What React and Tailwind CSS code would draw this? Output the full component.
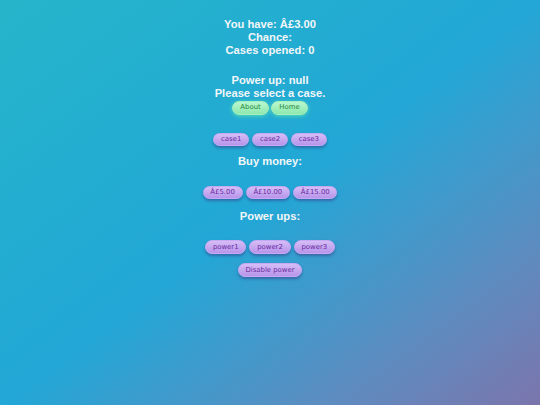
import React, { useState } from "react";

const cases = ["case1", "case2", "case3"];
const amounts = [5, 10, 15];
const powers = ["power1", "power2", "power3"];

// purple pill button
function Pill({ children, onClick }) {
  return (
    <button
      onClick={onClick}
      className="h-[13.5px] px-[6.8px] rounded-full bg-gradient-to-b from-[#d6bdf6] to-[#b895ea] text-[#6a2a9e] text-[6.9px] leading-none font-normal font-['DejaVu_Sans',sans-serif] shadow-[0_2px_3px_rgba(60,40,120,0.45)] border border-[#c7a8f2]"
    >
      {children}
    </button>
  );
}

function GreenPill({ children }) {
  return (
    <button className="h-[13.5px] px-[7.3px] rounded-full bg-gradient-to-b from-[#b8f7cf] to-[#8ee8ad] text-[#2a8a3a] text-[6.9px] leading-none font-normal font-['DejaVu_Sans',sans-serif] shadow-[0_1px_4px_rgba(120,255,160,0.6)] border border-[#a6f0c0]">
      {children}
    </button>
  );
}

export default function App() {
  const [money, setMoney] = useState(3);
  const [opened, setOpened] = useState(0);
  const [power, setPower] = useState(null);

  return (
    <div className="w-[540px] h-[405px] bg-[linear-gradient(to_bottom_right,#25b5ca_0%,#22a7d6_50%,#5d8cc0_80%,#7b75ac_100%)] font-['Liberation_Sans',Arial,sans-serif] text-[#f2f6f8] font-bold text-[11.2px] leading-[12.9px] text-center overflow-hidden">
      <div className="pt-[18px]">
        <div>You have: Â£{money.toFixed(2)}</div>
        <div>Chance: </div>
        <div>Cases opened: {opened}</div>
      </div>
      <div className="mt-[17.5px]">
        <div>Power up: {String(power)}</div>
        <div>Please select a case.</div>
      </div>
      <div className="flex justify-center gap-[2px] mt-[1px]">
        <GreenPill>About</GreenPill>
        <GreenPill>Home</GreenPill>
      </div>

      <div className="flex justify-center gap-[3px] mt-[18px]">
        {cases.map(c => (
          <Pill key={c} onClick={() => setOpened(o => o + 1)}>{c}</Pill>
        ))}
      </div>
      <div className="mt-[9px]">Buy money:</div>
      <div className="flex justify-center gap-[3px] mt-[18px]">
        {amounts.map(a => (
          <Pill key={a} onClick={() => setMoney(m => m + a)}>Â£{a.toFixed(2)}</Pill>
        ))}
      </div>
      <div className="mt-[10.5px]">Power ups:</div>
      <div className="flex justify-center gap-[3px] mt-[17.5px]">
        {powers.map(p => (
          <Pill key={p} onClick={() => setPower(p)}>{p}</Pill>
        ))}
      </div>
      <div className="flex justify-center mt-[9.5px]">
        <Pill onClick={() => setPower(null)}>Disable power</Pill>
      </div>
    </div>
  );
}
